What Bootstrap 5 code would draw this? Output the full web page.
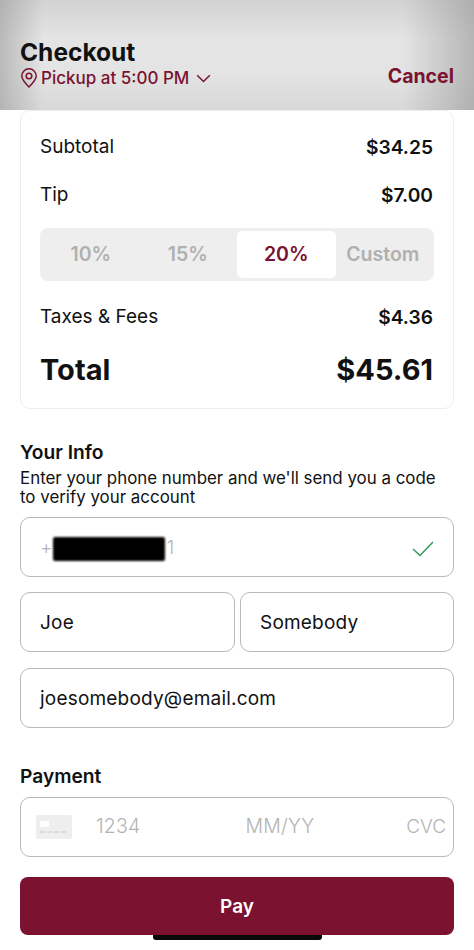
<!DOCTYPE html>
<html lang="en">
<head>
<meta charset="utf-8">
<meta name="viewport" content="width=device-width, initial-scale=1">
<link href="https://cdn.jsdelivr.net/npm/bootstrap@5.3.0/dist/css/bootstrap.min.css" rel="stylesheet">
<style>
html, body { height: 950px; overflow: hidden; }
body { font-family: Inter, "Liberation Sans", sans-serif; color: #111; background: #fff; position: relative; }
.topbar { height: 110px; padding: 0 20px 20px; background:
  linear-gradient(90deg, rgba(150,150,150,.55) 0, rgba(150,150,150,0) 9%, rgba(150,150,150,0) 85%, rgba(150,150,150,.6) 100%),
  linear-gradient(180deg, #d2d2d2 0, #e4e4e4 35%, #e4e4e4 65%, #d8d8d8 100%); }
.co-title { font-size: 24.5px; font-weight: 700; line-height: 26px; margin: 0; }
.wine { color: #7a1230; }
.pickup { font-size: 17px; font-weight: 500; line-height: 24px; gap: 3px; margin-top: 1px; }
.cancel-link { font-size: 19.5px; font-weight: 700; line-height: 24px; margin-bottom: 2px; text-decoration: none; }
.sum-card { margin: 0 20px; height: 299px; border: 1px solid #eee; border-radius: 10px; padding: 21px 20px 0 19px; }
.sum-row { font-size: 19px; height: 30px; line-height: 30px; }
.sum-row strong { font-weight: 600; font-size: 19.2px; }
.tip-row { margin-top: 18px; }
.seg { margin-top: 18px; height: 53px; background: #eee; border-radius: 8px; padding: 3px 0; margin-right: -1px; }
.seg-item { flex: 0 0 98.5px; text-align: center; font-size: 19.5px; font-weight: 600; color: #b0b0b0; line-height: 46px; border-radius: 5px; }
.seg-item:first-child { padding-left: 3px; }
.seg-item:last-child { padding-right: 4px; }
.seg-item.on { background: #fff; color: #7a1230; }
.tax-row { margin-top: 21px; }
.total-row { margin-top: 23px; height: 30px; font-size: 29px; font-weight: 700; line-height: 30px; }
.form-zone { padding: 31px 20px 0; }
.sect { font-size: 19.2px; font-weight: 600; line-height: 24px; margin: 0; }
.sect-note { font-size: 16.9px; line-height: 19px; margin: 5px 0 0; }
.fld { height: 60px; border: 1.5px solid #b9b9b9; border-radius: 10px; font-size: 19px; padding: 3px 19px 0; background: #fff; letter-spacing: .2px; }
.ph { color: #b3b3b3; font-weight: 300; }
.mask { display: inline-block; width: 112px; height: 24px; background: #000; border-radius: 2px; filter: blur(1px); margin: 0 2px 0 0; vertical-align: middle; }
.pay-btn { height: 58px; width: 100%; background: #7a1230; border: 0; border-radius: 8px; color: #fff; font-size: 19px; font-weight: 600; margin-top: 20px; padding-top: 8px; }
.pay-btn:hover { background: #7a1230; color: #fff; }
.homebar { position: absolute; left: 153px; top: 935px; width: 169px; height: 5px; background: #0a0a0a; border-radius: 0 0 3px 3px; }
.ph-field { margin-top: 10px; }
.name-row { margin-top: 15px; gap: 5px; }
.name-first { flex: 0 0 215px; }
.name-last { flex: 1 1 auto; }
.email-row { margin-top: 16px; }
.pay-head { margin-top: 36px; }
.card-row { margin-top: 9px; padding: 0 7px 0 15px; font-size: 19.5px; letter-spacing: .2px; }
.num-ph { margin-left: 24px; }
.exp-ph { margin-left: 105px; }
.cvc-ph { font-size: 19px; letter-spacing: 0; }
</style>
</head>
<body>
<header class="topbar d-flex justify-content-between align-items-end">
  <div>
    <h1 class="co-title">Checkout</h1>
    <div class="pickup wine d-flex align-items-center">
      <svg width="18" height="20" viewBox="0 0 18 20" fill="none" stroke="#7a1230" stroke-width="1.5"><path d="M9 19C5 15 1.8 11.6 1.8 8a7.2 7.2 0 0 1 14.4 0c0 3.6-3.2 7-7.2 11z"/><circle cx="9" cy="8" r="2.8"/></svg>
      <span>Pickup at 5:00 PM</span>
      <svg class="ms-1" width="15" height="9" viewBox="0 0 15 9" fill="none" stroke="#7a1230" stroke-width="1.5"><path d="M1.2 1.2 7.5 7.5l6.3-6.3"/></svg>
    </div>
  </div>
  <a href="#" class="cancel-link wine">Cancel</a>
</header>

<section class="sum-card">
  <div class="sum-row d-flex justify-content-between"><span>Subtotal</span><strong>$34.25</strong></div>
  <div class="sum-row tip-row d-flex justify-content-between"><span>Tip</span><strong>$7.00</strong></div>
  <div class="seg d-flex">
    <div class="seg-item">10%</div>
    <div class="seg-item">15%</div>
    <div class="seg-item on">20%</div>
    <div class="seg-item flex-fill">Custom</div>
  </div>
  <div class="sum-row tax-row d-flex justify-content-between"><span>Taxes &amp; Fees</span><strong>$4.36</strong></div>
  <div class="total-row d-flex justify-content-between"><span>Total</span><span>$45.61</span></div>
</section>

<main class="form-zone">
  <h2 class="sect">Your Info</h2>
  <p class="sect-note">Enter your phone number and we'll send you a code to verify your account</p>
  <div class="fld d-flex align-items-center justify-content-between ph-field">
    <span class="ph">+<span class="mask"></span>1</span>
    <svg width="22" height="16" viewBox="0 0 22 16" fill="none" stroke="#2e9e57" stroke-width="1.5"><path d="M1 8l7 6.5L21 1"/></svg>
  </div>
  <div class="d-flex name-row">
    <div class="fld d-flex align-items-center name-first">Joe</div>
    <div class="fld d-flex align-items-center name-last">Somebody</div>
  </div>
  <div class="fld d-flex align-items-center email-row">joesomebody@email.com</div>
  <h2 class="sect pay-head">Payment</h2>
  <div class="fld d-flex align-items-center card-row ph">
    <svg width="36" height="24" viewBox="0 0 36 24"><rect width="36" height="24" rx="2" fill="#eeeeee"/><rect x="4" y="6" width="9" height="6" rx="1" fill="#fff"/><path d="M4 17h28" stroke="#d6d6d6" stroke-width="1.5" stroke-dasharray="5 2"/></svg>
    <span class="num-ph">1234</span>
    <span class="exp-ph">MM/YY</span>
    <span class="ms-auto cvc-ph">CVC</span>
  </div>
  <button class="btn pay-btn">Pay</button>
</main>
<div class="homebar"></div>
<script src="https://cdn.jsdelivr.net/npm/bootstrap@5.3.0/dist/js/bootstrap.bundle.min.js"></script>
</body>
</html>
